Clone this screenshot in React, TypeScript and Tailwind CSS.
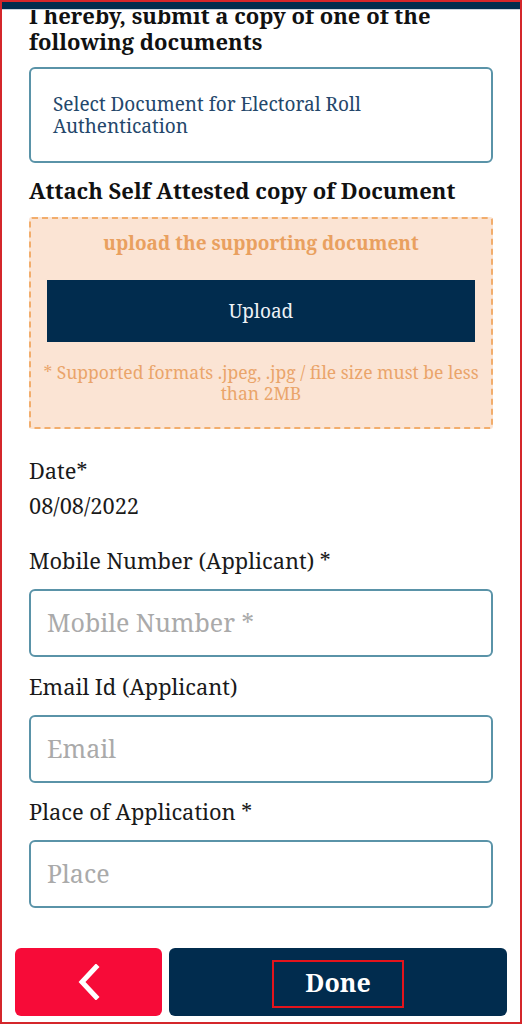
import React from "react";

const serif = { fontFamily: '"Noto Serif", "DejaVu Serif", serif' };

function Field({ label, placeholder, gap }: { label: string; placeholder: string; gap: string }) {
  return (
    <div className={"flex flex-col " + gap}>
      <div className="text-[21.8px] leading-[26px] text-[#1a1a1a]">{label}</div>
      <div className="mt-[15px] h-[68px] rounded-[6px] border-2 border-[#5a93a8] flex items-center px-[16px]">
        <span className="text-[25px] text-[#aaaaaa]">{placeholder}</span>
      </div>
    </div>
  );
}

export default function App() {
  return (
    <div
      className="w-[522px] h-[1024px] bg-white border-2 border-[#d4262b] flex flex-col overflow-hidden"
      style={serif}
    >
      <div className="h-[8px] bg-[#012c4e] border-b border-[#c9d3dc] shrink-0 relative z-10" />
      <div className="flex-1 flex flex-col px-[27px] overflow-hidden">
        <div className="mt-[-8px] text-[22px] leading-[26px] font-bold text-[#111]">
          I hereby, submit a copy of one of the following documents
        </div>
        <div className="mt-[13px] h-[96px] shrink-0 rounded-[6px] border-2 border-[#5a93a8] flex items-center px-[22px]">
          <span className="text-[19px] leading-[22px] text-[#24476b]">
            Select Document for Electoral Roll Authentication
          </span>
        </div>
        <div className="mt-[14px] text-[22px] leading-[26px] font-bold text-[#111]">
          Attach Self Attested copy of Document
        </div>
        <div className="mt-[14px] h-[212px] shrink-0 bg-[#fbe4d4] border-2 border-dashed border-[#f2ad6c] rounded-[3px] flex flex-col items-center px-[16px]">
          <div className="mt-[12px] text-[19px] leading-[24px] font-bold text-[#e9a05f]">
            upload the supporting document
          </div>
          <div className="mt-[25px] w-full h-[62px] shrink-0 bg-[#012c4e] flex items-center justify-center">
            <span className="text-[19px] text-[#eef2f6]">Upload</span>
          </div>
          <div className="mt-[20px] -mx-[12px] text-[17.5px] leading-[21px] text-[#eaa46a] text-center">
            * Supported formats .jpeg, .jpg / file size must be less than 2MB
          </div>
        </div>
        <div className="mt-[29px] text-[21.8px] leading-[26px] text-[#1a1a1a]">Date*</div>
        <div className="mt-[9px] text-[21.8px] leading-[26px] text-[#1a1a1a]">08/08/2022</div>
        <Field label="Mobile Number (Applicant) *" placeholder="Mobile Number *" gap="mt-[29px]" />
        <Field label="Email Id (Applicant)" placeholder="Email" gap="mt-[17px]" />
        <Field label="Place of Application *" placeholder="Place" gap="mt-[16px]" />
      </div>
      <div className="shrink-0 flex gap-[7px] px-[13px] pb-[6px]">
        <div className="w-[147px] h-[68px] rounded-[6px] bg-[#f70b38] flex items-center justify-center">
          <svg width="26" height="36" viewBox="0 0 26 36" fill="none">
            <path d="M20 3 L6 18 L20 33" stroke="white" strokeWidth="5" strokeLinecap="square" />
          </svg>
        </div>
        <div className="flex-1 h-[68px] rounded-[6px] bg-[#012c4e] flex items-center justify-center">
          <div className="mt-[3px] w-[132px] h-[48px] border-2 border-[#e3141c] flex items-center justify-center pb-[4px]">
            <span className="text-[25px] leading-[30px] font-bold text-white">Done</span>
          </div>
        </div>
      </div>
    </div>
  );
}
